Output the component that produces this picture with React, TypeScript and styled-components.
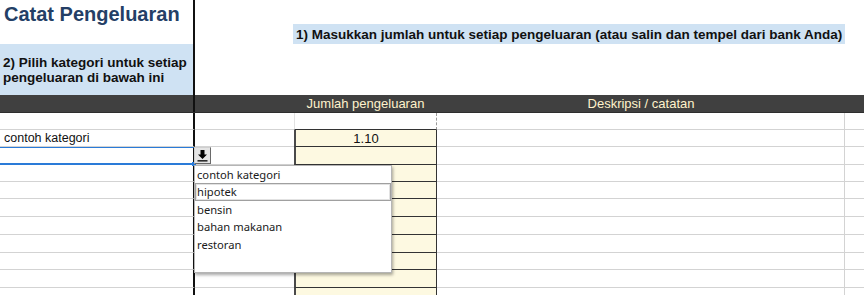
import React from "react";
import styled, { createGlobalStyle, css } from "styled-components";

const Global = createGlobalStyle`
  html, body { margin: 0; padding: 0; background: #fff; }
  body { font-family: "Liberation Sans", Arial, sans-serif; overflow: hidden; }
  * { box-sizing: border-box; }
`;

const COLS = "195px 99px 143px 408px 1fr";

const Sheet = styled.div`
  position: relative;
  width: 864px;
  height: 295px;
  overflow: hidden;
  display: flex;
  flex-direction: column;
  & > * { flex-shrink: 0; }
`;

const Top = styled.div`
  display: grid;
  grid-template-columns: ${COLS};
  height: 95px;
`;

const TopLeft = styled.div`
  grid-column: 1 / 2;
  border-right: 2px solid #111;
  display: flex;
  flex-direction: column;
`;

const Title = styled.div`
  height: 44px;
  padding: 2px 0 0 4px;
  font-size: 20px;
  font-weight: bold;
  color: #243f66;
  line-height: 24px;
`;

const Instruction = styled.div`
  flex: 1;
  background: #cfe2f3;
  padding: 11px 4px 0 3px;
  font-size: 13.5px;
  font-weight: bold;
  line-height: 15px;
  color: #111;
  white-space: nowrap;
`;

const TopRight = styled.div`
  grid-column: 2 / 6;
  display: grid;
  grid-template-columns: 99px 551px 1fr;
  align-content: start;
  padding-top: 24px;
`;

const Banner = styled.div`
  grid-column: 2 / 3;
  height: 20px;
  background: #cfe2f3;
  margin-left: -1px;
  padding-left: 3px;
  font-size: 13.5px;
  font-weight: bold;
  line-height: 21px;
  color: #111;
  white-space: nowrap;
`;

const HeaderBar = styled.div`
  display: grid;
  grid-template-columns: ${COLS};
  height: 18px;
  background: #404040;
  border-bottom: 1px solid #2e2e2e;
`;

const HeadCell = styled.div<{ $edge?: boolean }>`
  color: #fff2cc;
  font-size: 13px;
  line-height: 17px;
  text-align: center;
  white-space: nowrap;
  ${(p) => p.$edge && css`border-right: 2px solid #111;`}
`;

const Row = styled.div<{ $h: number }>`
  display: grid;
  grid-template-columns: ${COLS};
  grid-template-rows: ${(p) => p.$h}px;
  height: ${(p) => p.$h}px;
`;

const CellA = styled.div<{ $selected?: boolean }>`
  position: relative;
  min-height: 0;
  border-right: 2px solid #111;
  border-bottom: 1px solid #d3d3d3;
  font-size: 12.5px;
  padding: 1px 0 0 4px;
  line-height: 15px;
  color: #111;
  ${(p) =>
    p.$selected &&
    css`
      border-top: 1px solid #2a7bd8;
      border-bottom: 2px solid #2a7bd8;
      padding-top: 0;
    `}
`;

const Handle = styled.span`
  position: absolute;
  right: -3px;
  bottom: -3px;
  width: 4px;
  height: 4px;
  background: #2a7bd8;
  z-index: 1;
`;

const CellB = styled.div`
  position: relative;
  min-height: 0;
  border-bottom: 1px solid #d3d3d3;
`;

const CellC = styled.div<{ $kind: "blank" | "amount" }>`
  min-height: 0;
  font-size: 13px;
  padding-top: 1px;
  line-height: 15px;
  text-align: center;
  color: #111;
  ${(p) =>
    p.$kind === "blank"
      ? css`
          border-left: 1px solid #e2e2e2;
          border-right: 1px dashed #9a9a9a;
          border-bottom: 1px solid #333;
        `
      : css`
          background: #fdf9e1;
          border-left: 2px solid #4a4a4a;
          border-right: 1px solid #333;
          border-bottom: 1px solid #333;
        `}
`;

const CellD = styled.div`
  border-bottom: 1px solid #d3d3d3;
  border-right: 1px solid #d3d3d3;
`;

const CellE = styled.div`
  border-bottom: 1px solid #d3d3d3;
`;

const DropButton = styled.div`
  position: absolute;
  left: -1px;
  top: 0px;
  width: 17px;
  height: 17px;
  background: #e4e4e4;
  border: 1px solid #6a6a6a;
  border-top-color: #cfcfcf;
  border-left-color: #cfcfcf;
  display: flex;
  align-items: center;
  justify-content: center;
  z-index: 2;
`;

const DropList = styled.div`
  position: absolute;
  left: 194px;
  top: 165px;
  width: 198px;
  height: 108px;
  background: #fff;
  border: 1px solid #b5b5b5;
  box-shadow: 1px 2px 3px rgba(0, 0, 0, 0.35);
  display: flex;
  flex-direction: column;
  font-family: "Noto Sans", "Open Sans", sans-serif;
  font-size: 11.2px;
  color: #1a1a1a;
  z-index: 3;
`;

const Option = styled.div<{ $active?: boolean }>`
  height: 17.4px;
  line-height: 16px;
  padding-left: 1px;
  white-space: nowrap;
  border: 1px solid transparent;
  ${(p) =>
    p.$active &&
    css`
      border: 1px solid #a0a0a0;
      box-shadow: inset 0 0 0 1px #e2e2e2;
    `}
`;

const heights = [17, 17, 18, 17, 17, 18, 18, 18, 17, 18, 18];
const options = ["contoh kategori", "hipotek", "bensin", "bahan makanan", "restoran"];

const ArrowIcon = () => (
  <svg width="11" height="13" viewBox="0 0 11 13">
    <path d="M3.5 1h4v4.5h2.5L5.5 10 1 5.5h2.5z" fill="#000" />
    <rect x="0.5" y="11.2" width="10" height="1.3" fill="#000" />
  </svg>
);

export default function App() {
  return (
    <>
      <Global />
      <Sheet>
        <Top>
          <TopLeft>
            <Title>Catat Pengeluaran</Title>
            <Instruction>
              2) Pilih kategori untuk setiap
              <br />
              pengeluaran di bawah ini
            </Instruction>
          </TopLeft>
          <TopRight>
            <Banner>
              1) Masukkan jumlah untuk setiap pengeluaran (atau salin dan tempel dari bank Anda)
            </Banner>
          </TopRight>
        </Top>
        <HeaderBar>
          <HeadCell $edge />
          <HeadCell />
          <HeadCell>Jumlah pengeluaran</HeadCell>
          <HeadCell>Deskripsi / catatan</HeadCell>
          <HeadCell />
        </HeaderBar>
        {heights.map((h, i) => (
          <Row key={i} $h={h}>
            <CellA $selected={i === 2}>
              {i === 1 ? "contoh kategori" : ""}
              {i === 2 && <Handle />}
            </CellA>
            <CellB>
              {i === 2 && (
                <DropButton>
                  <ArrowIcon />
                </DropButton>
              )}
            </CellB>
            <CellC $kind={i === 0 ? "blank" : "amount"}>{i === 1 ? "1.10" : ""}</CellC>
            <CellD />
            <CellE />
          </Row>
        ))}
        <DropList>
          {options.map((o, i) => (
            <Option key={o} $active={i === 1}>
              {o}
            </Option>
          ))}
        </DropList>
      </Sheet>
    </>
  );
}
